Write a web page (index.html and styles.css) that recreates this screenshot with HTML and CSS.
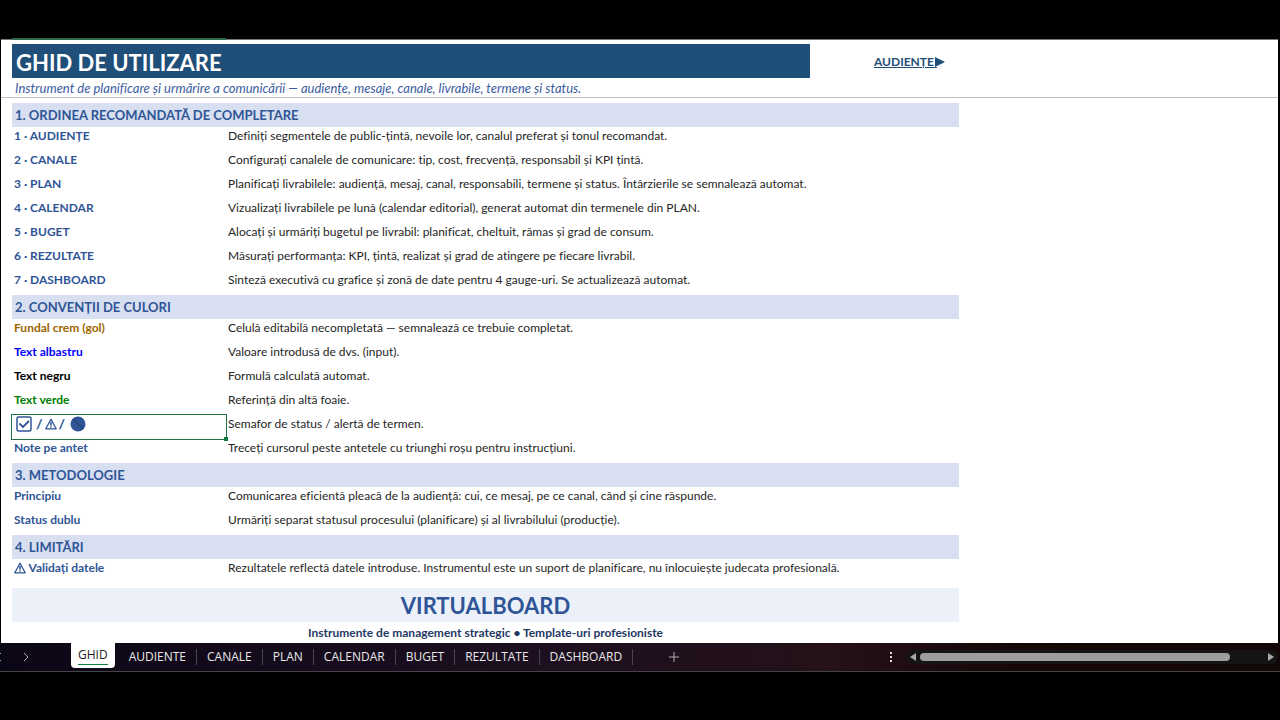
FILE: index.html
```html
<!DOCTYPE html>
<html lang="ro">
<head>
  <meta charset="UTF-8" />
  <meta name="viewport" content="width=device-width, initial-scale=1.0" />
  <title>Ghid de utilizare</title>
  <link rel="stylesheet" href="styles.css">
</head>
<body>
  <svg class="defs" aria-hidden="true">
    <symbol id="warning" viewBox="0 0 12 12">
      <path d="M6 1.2 L11.2 10.8 H0.8 Z" fill="none" stroke="currentColor" stroke-width="1.3" stroke-linejoin="round"/>
      <path d="M6 4 V7.8 M6 8.6 V9.8" stroke="currentColor" stroke-width="1.5"/>
    </symbol>
  </svg>

  <main class="sheet">
    <header class="top">
      <h1>GHID DE UTILIZARE</h1>
      <a class="next" href="#audiente">AUDIENȚE <svg viewBox="0 0 10 10"><path d="M0 0 L10 5 L0 10 Z" fill="currentColor"/></svg></a>
    </header>
    <p class="subtitle">Instrument de planificare și urmărire a comunicării — audiențe, mesaje, canale, livrabile, termene și status.</p>

    <div class="content">
      <table class="guide">
        <colgroup><col class="col-name"><col></colgroup>
        <tbody>
          <tr class="section"><th colspan="2">1. ORDINEA RECOMANDATĂ DE COMPLETARE</th></tr>
          <tr><th>1 · AUDIENȚE</th><td>Definiți segmentele de public-țintă, nevoile lor, canalul preferat și tonul recomandat.</td></tr>
          <tr><th>2 · CANALE</th><td>Configurați canalele de comunicare: tip, cost, frecvență, responsabil și KPI țintă.</td></tr>
          <tr><th>3 · PLAN</th><td>Planificați livrabilele: audiență, mesaj, canal, responsabili, termene și status. Întârzierile se semnalează automat.</td></tr>
          <tr><th>4 · CALENDAR</th><td>Vizualizați livrabilele pe lună (calendar editorial), generat automat din termenele din PLAN.</td></tr>
          <tr><th>5 · BUGET</th><td>Alocați și urmăriți bugetul pe livrabil: planificat, cheltuit, rămas și grad de consum.</td></tr>
          <tr><th>6 · REZULTATE</th><td>Măsurați performanța: KPI, țintă, realizat și grad de atingere pe fiecare livrabil.</td></tr>
          <tr><th>7 · DASHBOARD</th><td>Sinteză executivă cu grafice și zonă de date pentru 4 gauge-uri. Se actualizează automat.</td></tr>
        </tbody>
        <tbody>
          <tr class="section"><th colspan="2">2. CONVENȚII DE CULORI</th></tr>
          <tr><th class="cream">Fundal crem (gol)</th><td>Celulă editabilă necompletată — semnalează ce trebuie completat.</td></tr>
          <tr><th class="blue">Text albastru</th><td>Valoare introdusă de dvs. (input).</td></tr>
          <tr><th class="black">Text negru</th><td>Formulă calculată automat.</td></tr>
          <tr><th class="green">Text verde</th><td>Referință din altă foaie.</td></tr>
          <tr>
            <th class="selected">
              <div class="symbols">
                <svg class="check" viewBox="0 0 16 16"><rect x="1" y="1" width="14" height="14" rx="1.5" fill="none" stroke="currentColor" stroke-width="1.5"/><path d="M3.5 7.5 L7 11 L13 5" fill="none" stroke="currentColor" stroke-width="1.8"/></svg>
                <span>/</span>
                <svg class="warn" viewBox="0 0 12 12"><use href="#warning"/></svg>
                <span>/</span>
                <svg class="stop" viewBox="0 0 16 16"><circle cx="8" cy="8" r="7.5" fill="currentColor"/><path d="M3 3 L13 13" stroke="#1f4478" stroke-width="1.2"/></svg>
              </div>
            </th>
            <td>Semafor de status / alertă de termen.</td>
          </tr>
          <tr><th>Note pe antet</th><td>Treceți cursorul peste antetele cu triunghi roșu pentru instrucțiuni.</td></tr>
        </tbody>
        <tbody>
          <tr class="section"><th colspan="2">3. METODOLOGIE</th></tr>
          <tr><th>Principiu</th><td>Comunicarea eficientă pleacă de la audiență: cui, ce mesaj, pe ce canal, când și cine răspunde.</td></tr>
          <tr><th>Status dublu</th><td>Urmăriți separat statusul procesului (planificare) și al livrabilului (producție).</td></tr>
        </tbody>
        <tbody>
          <tr class="section"><th colspan="2">4. LIMITĂRI</th></tr>
          <tr><th><svg class="warn" viewBox="0 0 12 12"><use href="#warning"/></svg> Validați datele</th><td>Rezultatele reflectă datele introduse. Instrumentul este un suport de planificare, nu înlocuiește judecata profesională.</td></tr>
        </tbody>
      </table>

      <footer class="brand">
        <div class="brand-name">VIRTUALBOARD</div>
        <p>Instrumente de management strategic • Template-uri profesioniste</p>
      </footer>
    </div>
  </main>

  <nav class="tabbar">
    <button class="arrow" aria-label="Înapoi"><svg viewBox="0 0 8 10"><path d="M6 1 L2 5 L6 9"/></svg></button>
    <button class="arrow" aria-label="Înainte"><svg viewBox="0 0 8 10"><path d="M2 1 L6 5 L2 9"/></svg></button>
    <div class="tabs">
      <button class="tab active"><span>GHID</span></button>
      <button class="tab">AUDIENTE</button>
      <button class="tab">CANALE</button>
      <button class="tab">PLAN</button>
      <button class="tab">CALENDAR</button>
      <button class="tab">BUGET</button>
      <button class="tab">REZULTATE</button>
      <button class="tab">DASHBOARD</button>
    </div>
    <button class="add" aria-label="Foaie nouă"><svg viewBox="0 0 10 10"><path d="M5 0 V10 M0 5 H10"/></svg></button>
    <div class="dots"><i></i><i></i><i></i></div>
    <div class="scroll">
      <button aria-label="Stânga"><svg viewBox="0 0 6 8"><path d="M6 0 L0 4 L6 8 Z"/></svg></button>
      <div class="track"><div class="thumb"></div></div>
      <button aria-label="Dreapta"><svg viewBox="0 0 6 8"><path d="M0 0 L6 4 L0 8 Z"/></svg></button>
    </div>
  </nav>
</body>
</html>
```
FILE: styles.css
```css
* {
  box-sizing: border-box;
}
body {
  margin: 0;
  padding-top: 39px;
  background: #000;
  font-family: Lato, "Liberation Sans", sans-serif;
  font-size: 12px;
  font-variant-ligatures: none;
  color: #262626;
  overflow: hidden;
}
h1, p {
  margin: 0;
}
button {
  margin: 0;
  padding: 0;
  border: none;
  background: none;
  color: inherit;
  font: inherit;
}
.defs {
  position: absolute;
  width: 0;
  height: 0;
}

/* sheet */
.sheet {
  position: relative;
  margin: 0 2px 0 1px;
  padding-top: 4px;
  background: #fff;
  border-top: 1px solid #777;
}
/* header mark of the selected column */
.sheet::before {
  content: "";
  position: absolute;
  top: -2px;
  left: 11px;
  width: 214px;
  height: 2px;
  background: #2f6b4a;
}
.top {
  display: flex;
  align-items: center;
  padding-left: 11px;
}
.top h1 {
  width: 798px;
  height: 34px;
  padding-left: 4px;
  background: #1f4e78;
  color: #fff;
  font-size: 22px;
  line-height: 38px;
}
.next {
  margin-left: 64px;
  color: #1f4e78;
  font-size: 12px;
  font-weight: bold;
}
.next svg {
  width: 10px;
  height: 10px;
  margin-left: -2px;
  vertical-align: -1px;
}
.subtitle {
  height: 20px;
  padding-left: 14px;
  border-bottom: 1px solid #bfbfbf;
  color: #3b5ba0;
  font-size: 13px;
  font-style: italic;
  line-height: 20px;
}
.content {
  width: 958px;
  max-width: 100%;
  padding: 5px 0 0 11px;
}
.guide {
  width: 100%;
  table-layout: fixed;
  border-collapse: collapse;
}
.col-name {
  width: 214px;
}
.guide tr {
  height: 24px;
}
.guide th,
.guide td {
  position: relative;
  padding: 0 2px 6px;
  line-height: 18px;
  text-align: left;
  white-space: nowrap;
}
.guide th {
  color: #2f5597;
}
.guide .section th {
  padding: 0 3px;
  background: #d7dff0;
  font-size: 13px;
  line-height: 24px;
}
.guide .cream { color: #9c6500; }
.guide .blue { color: #0000ff; }
.guide .black { color: #000; }
.guide .green { color: #008000; }
.warn {
  width: 12px;
  height: 12px;
  vertical-align: -2px;
}
.selected::before {
  content: "";
  position: absolute;
  inset: -1px;
  border: 1px solid #217346;
}
.selected::after {
  content: "";
  position: absolute;
  right: -2px;
  bottom: -2px;
  width: 4px;
  height: 4px;
  background: #107c41;
}
.symbols {
  display: flex;
  align-items: center;
  gap: 2px;
  padding-left: 2px;
  height: 18px;
  font-size: 14px;
}
.check,
.stop {
  width: 16px;
  height: 16px;
}
.check {
  margin-right: 2px;
}
.stop {
  margin-left: 3px;
}
.brand {
  margin-top: 5px;
  color: #1f3864;
  font-weight: bold;
  text-align: center;
}
.brand-name {
  height: 34px;
  background: #ecf0f9;
  color: #2f5597;
  font-size: 22px;
  line-height: 36px;
}
.brand p {
  height: 21px;
  line-height: 21px;
}

/* sheet tabs */
.tabbar {
  display: flex;
  align-items: center;
  height: 29px;
  border-bottom: 1px solid #444;
  background: linear-gradient(90deg, #0b0616, #1c0f20 40%, #241119 65%, #160606 80%, #120606);
  color: #e8e8e8;
  font-family: "Open Sans", sans-serif;
}
.tabbar svg {
  display: block;
}
.arrow svg,
.add svg {
  fill: none;
  stroke: #aaa;
}
.arrow svg {
  width: 8px;
  height: 10px;
}
.arrow:first-child {
  margin-left: -5px;
}
.arrow + .arrow {
  margin-left: 19px;
}
.tabs {
  display: flex;
  align-items: center;
  align-self: stretch;
  margin-left: 41px;
}
.tab {
  height: 16px;
  padding: 0 10px;
  border-right: 1px solid #4a444c;
  line-height: 16px;
}
.tab.active {
  height: 25px;
  margin-right: 4px;
  padding: 0 7px;
  align-self: flex-start;
  border: none;
  border-radius: 0 0 4px 4px;
  background: #fff;
  color: #222;
}
.tab.active span {
  display: block;
  border-bottom: 1px solid #107c41;
  line-height: 18px;
}
.add {
  margin-left: 36px;
}
.add svg {
  width: 10px;
  height: 10px;
}
.dots {
  display: flex;
  flex-direction: column;
  gap: 2px;
  margin-left: auto;
}
.dots i {
  width: 2px;
  height: 2px;
  background: #ddd;
}
.scroll {
  display: flex;
  align-items: center;
  gap: 4px;
  width: 372px;
  height: 14px;
  margin: 0 2px 0 14px;
  padding: 0 4px;
  border-radius: 7px;
  background: #141414;
}
.scroll svg {
  width: 6px;
  height: 8px;
  fill: #a8a8a8;
}
.track {
  flex: 1;
}
.thumb {
  width: 90%;
  height: 8px;
  border-radius: 4px;
  background: #9d9d9d;
}
```
